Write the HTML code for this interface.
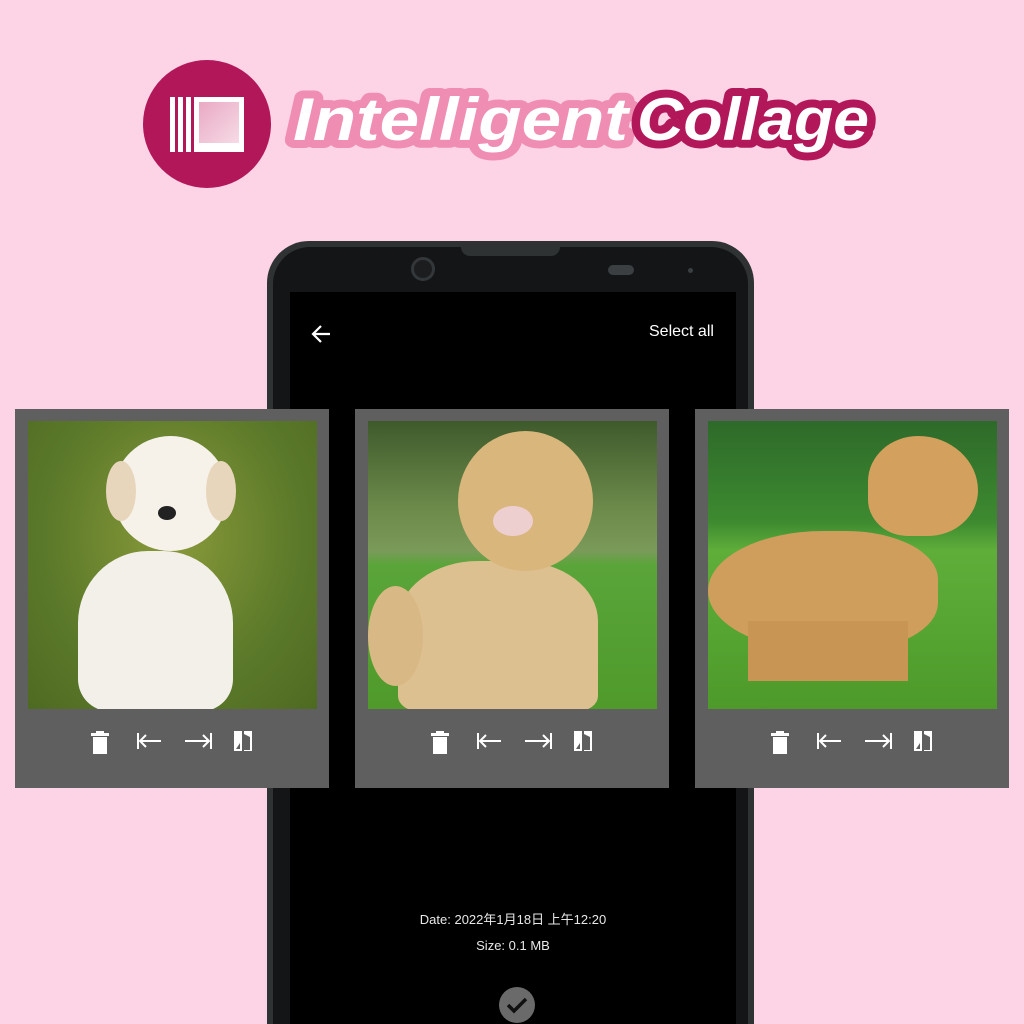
<!DOCTYPE html>
<html><head><meta charset="utf-8"><style>
*{margin:0;padding:0;box-sizing:border-box}
html{width:1024px;height:1024px;overflow:hidden}
body{width:1024px;height:1024px;background:#fdd3e6;position:relative;overflow:hidden;font-family:"Liberation Sans","Noto Sans CJK SC",sans-serif}
.abs{position:absolute}
.logo{left:143px;top:60px;width:128px;height:128px;border-radius:50%;background:#b2175a}
.phone{left:267px;top:241px;width:487px;height:800px;border-radius:42px 42px 0 0;background:#2f3233}
.bezel{left:273px;top:247px;width:475px;height:790px;border-radius:37px 37px 0 0;background:#131517}
.screen{left:290px;top:292px;width:446px;height:740px;background:#000}
.card{top:409px;width:314px;height:379px;background:#5f5f5f}
.img{position:absolute;left:13px;top:12px;width:289px;height:288px;overflow:hidden}
.txt{color:#e8e8e8;font-size:13px;width:446px;text-align:center;left:290px}
</style></head><body>
<div class="abs logo">
  <div class="abs" style="left:27px;top:37px;width:5px;height:55px;background:#fff"></div>
  <div class="abs" style="left:35px;top:37px;width:5px;height:55px;background:#fff"></div>
  <div class="abs" style="left:43px;top:37px;width:5px;height:55px;background:#fff"></div>
  <div class="abs" style="left:51px;top:37px;width:50px;height:55px;background:#fff"></div>
  <div class="abs" style="left:56px;top:42px;width:40px;height:41px;background:linear-gradient(135deg,#e9a9c3,#f6dbe6)"></div>
</div>
<svg class="abs" style="left:285px;top:70px" width="600" height="100">
 <g font-family="Liberation Sans" font-style="italic" font-weight="bold" font-size="60">
  <text x="8" y="70" fill="#fff" stroke="#f08db3" stroke-width="16" stroke-linejoin="round" textLength="335" lengthAdjust="spacingAndGlyphs">Intelligent</text>
  <text x="8" y="70" fill="#fff" textLength="335" lengthAdjust="spacingAndGlyphs">Intelligent</text>
  <text x="352" y="70" fill="#fff" stroke="#b2175a" stroke-width="16" stroke-linejoin="round" textLength="232" lengthAdjust="spacingAndGlyphs">Collage</text>
  <text x="352" y="70" fill="#fff" textLength="232" lengthAdjust="spacingAndGlyphs">Collage</text>
 </g>
</svg>
<div class="abs phone"></div>
<div class="abs bezel"></div>
<div class="abs" style="left:461px;top:247px;width:99px;height:9px;background:#2f3233;border-radius:0 0 10px 10px"></div>
<div class="abs" style="left:411px;top:257px;width:24px;height:24px;border-radius:50%;border:3px solid #33373a;background:#1b1d1f"></div>
<div class="abs" style="left:608px;top:265px;width:26px;height:10px;border-radius:5px;background:#3b3f42"></div>
<div class="abs" style="left:688px;top:268px;width:5px;height:5px;border-radius:50%;background:#3b3f42"></div>
<div class="abs screen"></div>
<svg class="abs" style="left:310px;top:323px" width="22" height="22"><path d="M20 11H4M11 3 3 11l8 8" stroke="#fff" stroke-width="2.2" fill="none"/></svg>
<div class="abs" style="left:649px;top:323px;color:#fff;font-size:16px">Select all</div>

<div class="abs card" style="left:15px">
 <div class="img" style="background:radial-gradient(ellipse at 50% 40%,#8a9a3a,#5c7a2a 60%,#4e6a22)">
  <div class="abs" style="left:50px;top:130px;width:155px;height:160px;border-radius:45% 45% 20% 20%;background:#f3f0ea"></div>
  <div class="abs" style="left:85px;top:15px;width:115px;height:115px;border-radius:50%;background:#f6f2ea"></div>
  <div class="abs" style="left:78px;top:40px;width:30px;height:60px;border-radius:50%;background:#e8d6bc"></div>
  <div class="abs" style="left:178px;top:40px;width:30px;height:60px;border-radius:50%;background:#e8d6bc"></div>
  <div class="abs" style="left:130px;top:85px;width:18px;height:14px;border-radius:50%;background:#222"></div>
 </div>
</div>
<div class="abs card" style="left:355px">
 <div class="img" style="background:linear-gradient(#3e5a2c 0%,#6c8a4a 30%,#7a9a5a 45%,#5aa53a 50%,#4f9a2a 100%)">
  <div class="abs" style="left:30px;top:140px;width:200px;height:150px;border-radius:40% 40% 10% 10%;background:#dcc08f"></div>
  <div class="abs" style="left:0;top:165px;width:55px;height:100px;border-radius:50%;background:#d8b884"></div>
  <div class="abs" style="left:90px;top:10px;width:135px;height:140px;border-radius:50%;background:#d9b67c"></div>
  <div class="abs" style="left:125px;top:85px;width:40px;height:30px;border-radius:50%;background:#eecfd0"></div>
 </div>
</div>
<div class="abs card" style="left:695px">
 <div class="img" style="background:linear-gradient(#2e6a2a 0%,#3d8a30 35%,#5fae3a 45%,#4d9a2a 100%)">
  <div class="abs" style="left:0;top:110px;width:230px;height:120px;border-radius:50% 40% 40% 50%;background:#cf9d5c"></div>
  <div class="abs" style="left:40px;top:200px;width:160px;height:60px;background:#c89555"></div>
  <div class="abs" style="left:160px;top:15px;width:110px;height:100px;border-radius:50% 60% 50% 40%;background:#d4a05e"></div>
 </div>
</div>

<svg width="0" height="0" style="position:absolute"><defs>
<g id="ic" fill="#fff" stroke="none">
 <rect x="78" y="8" width="14" height="17"/><rect x="76" y="4" width="18" height="3"/><rect x="81" y="2" width="8" height="3"/>
 <g stroke="#fff" stroke-width="2" fill="none"><path d="M123 4v16M146 12h-21M131 6l-6 6 6 6"/><path d="M196 4v16M170 12h24M188 6l6 6-6 6"/></g>
 <path d="M219 2h8v20h-8zM229 2h8v20h-8z" fill="#fff"/><path d="M229 5l6 3v13h-6z" fill="#5f5f5f"/><path d="M221 20l4-6v6z" fill="#5f5f5f"/>
</g></defs></svg>
<svg class="abs" style="left:15px;top:729px" width="314" height="26"><use href="#ic"/></svg>
<svg class="abs" style="left:355px;top:729px" width="314" height="26"><use href="#ic"/></svg>
<svg class="abs" style="left:695px;top:729px" width="314" height="26"><use href="#ic"/></svg>

<div class="abs txt" style="top:909px">Date: 2022年1月18日 上午12:20</div>
<div class="abs txt" style="top:938px">Size: 0.1 MB</div>
<div class="abs" style="left:499px;top:987px;width:36px;height:36px;border-radius:50%;background:#6a6a6a"></div>
<svg class="abs" style="left:499px;top:987px" width="36" height="36"><path d="M9 18l6 6 12-12" stroke="#111" stroke-width="3.5" fill="none"/></svg>
</body></html>
